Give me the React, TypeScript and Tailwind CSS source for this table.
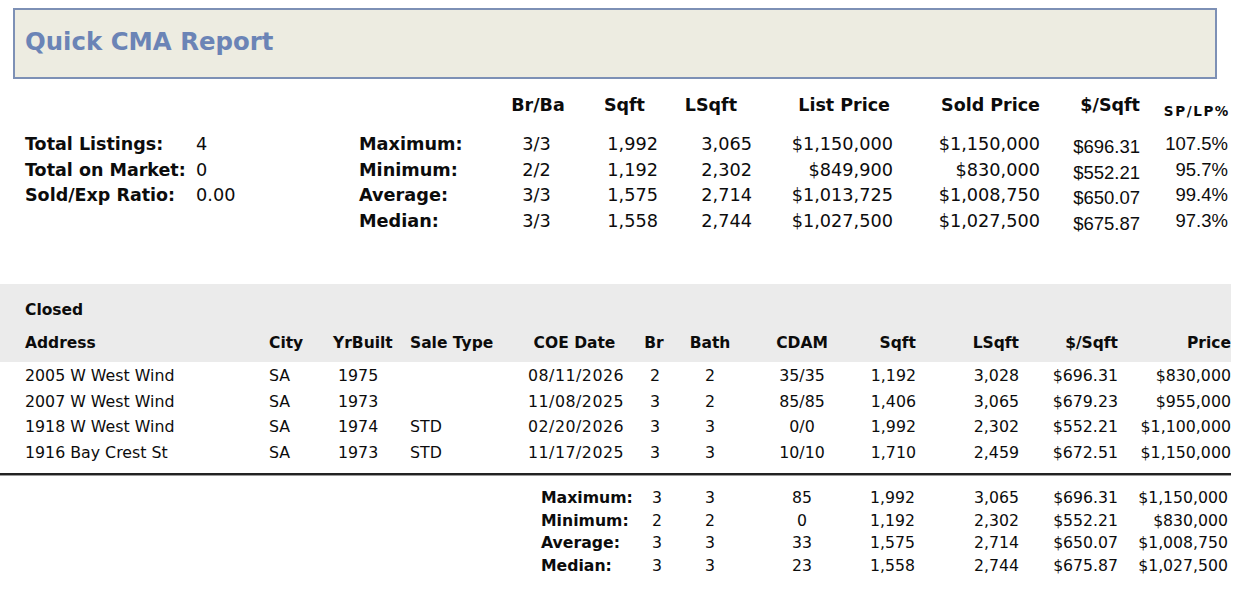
import React from "react";

const statCols =
  "grid grid-cols-[171px_163px_141px_76px_82px_94px_141px_147px_100px_88px]";
const tableCols =
  "grid grid-cols-[244px_64px_77px_118px_96px_62px_48px_136px_46px_103px_99px_113px]";

const statRows = [
  { label: "Maximum:", brba: "3/3", sqft: "1,992", lsqft: "3,065", list: "$1,150,000", sold: "$1,150,000", pps: "$696.31", pct: "107.5%" },
  { label: "Minimum:", brba: "2/2", sqft: "1,192", lsqft: "2,302", list: "$849,900", sold: "$830,000", pps: "$552.21", pct: "95.7%" },
  { label: "Average:", brba: "3/3", sqft: "1,575", lsqft: "2,714", list: "$1,013,725", sold: "$1,008,750", pps: "$650.07", pct: "99.4%" },
  { label: "Median:", brba: "3/3", sqft: "1,558", lsqft: "2,744", list: "$1,027,500", sold: "$1,027,500", pps: "$675.87", pct: "97.3%" },
];

const leftRows: [string, string][] = [
  ["Total Listings:", "4"],
  ["Total on Market:", "0"],
  ["Sold/Exp Ratio:", "0.00"],
  ["", ""],
];

const listings = [
  { addr: "2005 W West Wind", city: "SA", yr: "1975", type: "", coe: "08/11/2026", br: "2", bath: "2", cdam: "35/35", sqft: "1,192", lsqft: "3,028", pps: "$696.31", price: "$830,000" },
  { addr: "2007 W West Wind", city: "SA", yr: "1973", type: "", coe: "11/08/2025", br: "3", bath: "2", cdam: "85/85", sqft: "1,406", lsqft: "3,065", pps: "$679.23", price: "$955,000" },
  { addr: "1918 W West Wind", city: "SA", yr: "1974", type: "STD", coe: "02/20/2026", br: "3", bath: "3", cdam: "0/0", sqft: "1,992", lsqft: "2,302", pps: "$552.21", price: "$1,100,000" },
  { addr: "1916 Bay Crest St", city: "SA", yr: "1973", type: "STD", coe: "11/17/2025", br: "3", bath: "3", cdam: "10/10", sqft: "1,710", lsqft: "2,459", pps: "$672.51", price: "$1,150,000" },
];

const summary = [
  { label: "Maximum:", br: "3", bath: "3", cdam: "85", sqft: "1,992", lsqft: "3,065", pps: "$696.31", price: "$1,150,000" },
  { label: "Minimum:", br: "2", bath: "2", cdam: "0", sqft: "1,192", lsqft: "2,302", pps: "$552.21", price: "$830,000" },
  { label: "Average:", br: "3", bath: "3", cdam: "33", sqft: "1,575", lsqft: "2,714", pps: "$650.07", price: "$1,008,750" },
  { label: "Median:", br: "3", bath: "3", cdam: "23", sqft: "1,558", lsqft: "2,744", pps: "$675.87", price: "$1,027,500" },
];

export default function App() {
  return (
    <div className="w-[1240px] h-[598px] overflow-hidden bg-white font-['DejaVu_Sans',sans-serif] text-[#0c0c0c]">
      {/* Title box */}
      <div className="pt-[8px] pl-[13px]">
        <div className="w-[1204px] h-[71px] border-2 border-[#7d90b5] bg-[#edece1] flex items-center pl-[10px]">
          <h1 className="text-[24.4px] font-bold text-[#6b84b6] leading-none mt-[-2px]">Quick CMA Report</h1>
        </div>
      </div>

      {/* Summary stats */}
      <div className="pl-[25px] mt-[13px]">
        <div className={`${statCols} h-[26px] items-center text-[17.5px] font-bold leading-[26px] whitespace-nowrap`}>
          <div />
          <div />
          <div />
          <div className="text-center">Br/Ba</div>
          <div className="text-right pr-[13px]">Sqft</div>
          <div className="text-right pr-[15px]">LSqft</div>
          <div className="text-right pr-[3px]">List Price</div>
          <div className="text-right">Sold Price</div>
          <div className="text-right">$/Sqft</div>
          <div className="text-right text-[13.5px] tracking-[1.6px] mr-[-2px] translate-y-[6px]">SP/LP%</div>
        </div>
        <div className="mt-[14px]">
          {statRows.map((r, i) => (
            <div key={r.label} className={`${statCols} h-[25.5px] leading-[25.5px] whitespace-nowrap`}>
              <div className="text-[17.5px] font-bold">{leftRows[i][0]}</div>
              <div className="text-[17.7px]">{leftRows[i][1]}</div>
              <div className="text-[17.7px] font-bold">{r.label}</div>
              <div className="text-[17.7px] text-center pr-[3px]">{r.brba}</div>
              <div className="text-[17.7px] text-right">{r.sqft}</div>
              <div className="text-[17.7px] text-right">{r.lsqft}</div>
              <div className="text-[17.7px] text-right">{r.list}</div>
              <div className="text-[17.7px] text-right">{r.sold}</div>
              <div className="text-[18.5px] text-right font-['Liberation_Sans',Arial,sans-serif] translate-y-[2px]">{r.pps}</div>
              <div className="text-[18.5px] text-right font-['Liberation_Sans',Arial,sans-serif] -translate-y-[1px]">{r.pct}</div>
            </div>
          ))}
        </div>
      </div>

      {/* Closed listings */}
      <div className="mt-[50px] w-[1231px]">
        <div className="bg-[#ebebeb] pt-[13px] pl-[25px] h-[78px]">
          <div className="h-[26px] leading-[26px] text-[15.5px] font-bold">Closed</div>
          <div className={`${tableCols} h-[40px] leading-[40px] text-[15.5px] font-bold whitespace-nowrap`}>
            <div>Address</div>
            <div>City</div>
            <div>YrBuilt</div>
            <div>Sale Type</div>
            <div className="text-center pr-[3px]">COE Date</div>
            <div className="text-center pr-[2px]">Br</div>
            <div className="text-center">Bath</div>
            <div className="text-center">CDAM</div>
            <div className="text-right">Sqft</div>
            <div className="text-right">LSqft</div>
            <div className="text-right">$/Sqft</div>
            <div className="text-right">Price</div>
          </div>
        </div>
        <div className="pl-[25px] pt-[1px]">
          {listings.map((l) => (
            <div key={l.addr} className={`${tableCols} h-[25.5px] leading-[25.5px] text-[15.8px] whitespace-nowrap`}>
              <div>{l.addr}</div>
              <div>{l.city}</div>
              <div className="pl-[5px]">{l.yr}</div>
              <div>{l.type}</div>
              <div className="text-center tracking-[0.5px]">{l.coe}</div>
              <div className="text-center">{l.br}</div>
              <div className="text-center">{l.bath}</div>
              <div className="text-center">{l.cdam}</div>
              <div className="text-right">{l.sqft}</div>
              <div className="text-right">{l.lsqft}</div>
              <div className="text-right">{l.pps}</div>
              <div className="text-right">{l.price}</div>
            </div>
          ))}
        </div>
        <div className="mt-[8px] h-[3px] border-t-2 border-[#222] border-b border-b-[#9a9a9a]" />
        <div className="pl-[25px] pt-[11px]">
          {summary.map((s) => (
            <div key={s.label} className={`${tableCols} h-[22.67px] leading-[22.67px] text-[15.7px] whitespace-nowrap`}>
              <div className="col-span-5 pl-[516px] font-bold text-[15.7px]">{s.label}</div>
              <div className="text-center pl-[4px]">{s.br}</div>
              <div className="text-center">{s.bath}</div>
              <div className="text-center">{s.cdam}</div>
              <div className="text-right pr-[2px]">{s.sqft}</div>
              <div className="text-right pl-0">{s.lsqft}</div>
              <div className="text-right">{s.pps}</div>
              <div className="text-right pr-[3px]">{s.price}</div>
            </div>
          ))}
        </div>
      </div>
    </div>
  );
}
